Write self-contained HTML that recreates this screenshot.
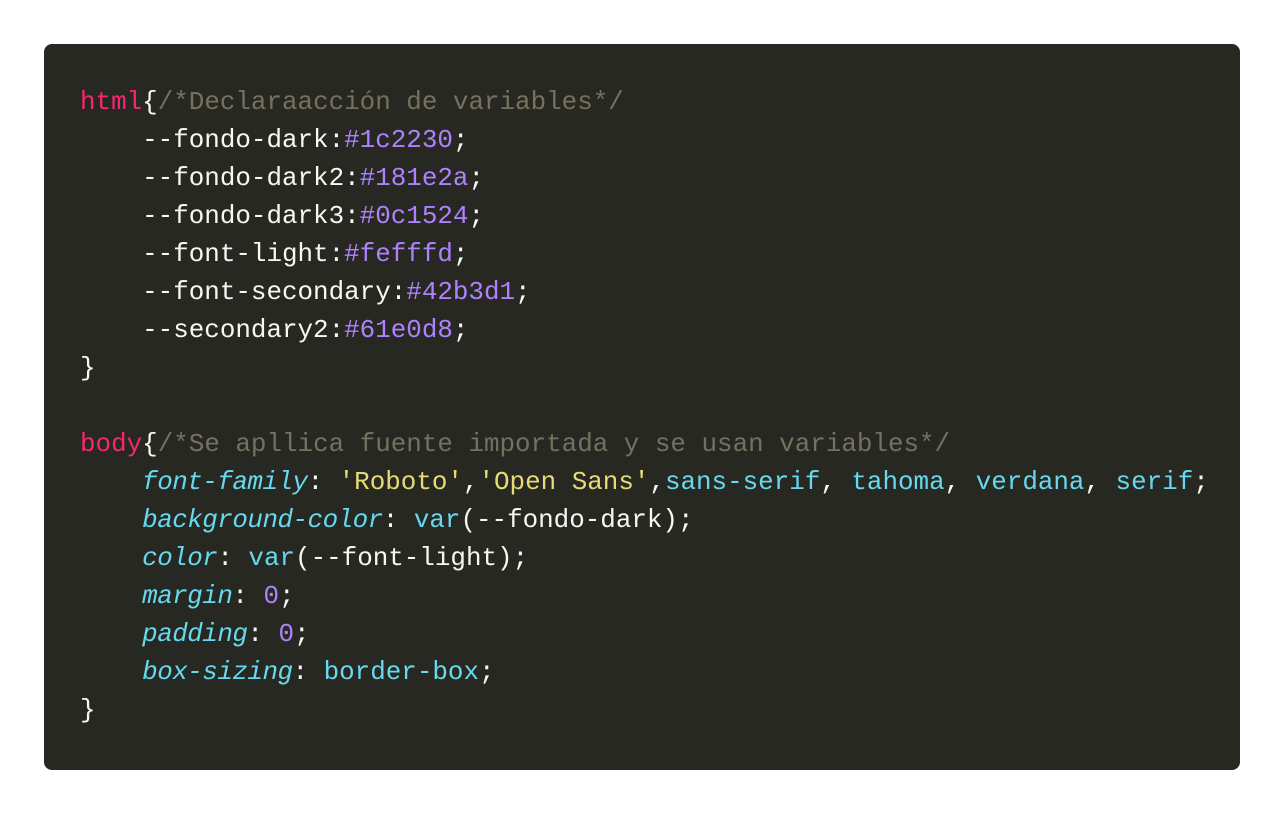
<!DOCTYPE html>
<html><head><meta charset="utf-8"><style>
html,body{margin:0;padding:0;background:#fff;width:1284px;height:814px;overflow:hidden}
.box{position:absolute;left:44px;top:44px;width:1196px;height:726px;background:#272822;border-radius:8px}
pre{margin:0;position:absolute;left:36px;top:39px;font-family:"Liberation Mono",monospace;font-size:25.9px;line-height:38px;color:#f8f8f2;letter-spacing:0}
.k{color:#f92672}.c{color:#75715e}.n{color:#ae81ff}.s{color:#e6db74}.b{color:#66d9ef}.p{color:#66d9ef;font-style:italic;letter-spacing:-0.5px}
</style></head><body><div class="box"><pre><span class="k">html</span>{<span class="c">/*Declaraacción de variables*/</span>
    --fondo-dark:<span class="n">#1c2230</span>;
    --fondo-dark2:<span class="n">#181e2a</span>;
    --fondo-dark3:<span class="n">#0c1524</span>;
    --font-light:<span class="n">#fefffd</span>;
    --font-secondary:<span class="n">#42b3d1</span>;
    --secondary2:<span class="n">#61e0d8</span>;
}

<span class="k">body</span>{<span class="c">/*Se apllica fuente importada y se usan variables*/</span>
    <span class="p">font-family</span>: <span class="s">'Roboto'</span>,<span class="s">'Open Sans'</span>,<span class="b">sans-serif</span>, <span class="b">tahoma</span>, <span class="b">verdana</span>, <span class="b">serif</span>;
    <span class="p">background-color</span>: <span class="b">var</span>(--fondo-dark);
    <span class="p">color</span>: <span class="b">var</span>(--font-light);
    <span class="p">margin</span>: <span class="n">0</span>;
    <span class="p">padding</span>: <span class="n">0</span>;
    <span class="p">box-sizing</span>: <span class="b">border-box</span>;
}</pre></div></body></html>
